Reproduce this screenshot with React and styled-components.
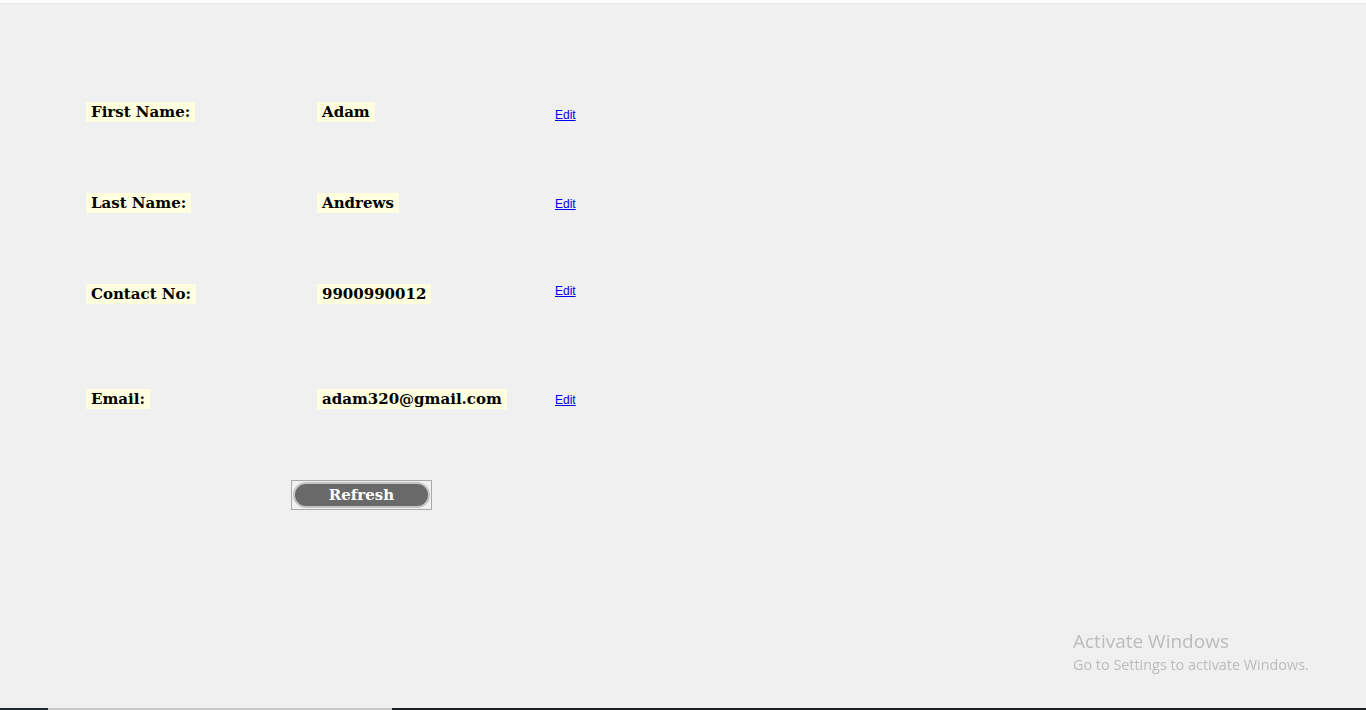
import styled, { createGlobalStyle } from "styled-components";

const GlobalStyle = createGlobalStyle`
  html, body {
    margin: 0;
    padding: 0;
    background: #f0f0f0;
  }
  #root {
    min-height: 710px;
    display: flex;
    flex-direction: column;
  }
`;

const TopStrip = styled.div`
  height: 3px;
  background: #ffffff;
  border-bottom: 1px solid #e6e6e6;
`;

const Page = styled.div`
  flex: 1;
  padding: 94px 0 0 86px;
  font-family: "DejaVu Serif", "Liberation Serif", serif;
`;

const Row = styled.div`
  display: grid;
  grid-template-columns: 231px 238px auto;
  align-items: start;
  height: ${(p) => p.$h}px;
`;

const Cell = styled.div`
  padding-top: 4px;
`;

const Tag = styled.span`
  display: inline-block;
  background: #ffffe0;
  color: #000;
  font-weight: bold;
  font-size: 15px;
  line-height: 20px;
  padding: 0 5px;
`;

const EditLink = styled.a`
  display: block;
  width: fit-content;
  margin-top: ${(p) => p.$top}px;
  font-family: "Liberation Sans", Arial, sans-serif;
  font-size: 12px;
  line-height: 14px;
  color: #0000ee;
  text-decoration: underline;
  cursor: pointer;
`;

const ButtonRow = styled.div`
  padding-left: 205px;
  margin-top: 2px;
`;

const ButtonFrame = styled.div`
  display: inline-flex;
  width: 139px;
  height: 28px;
  border: 1px solid #aaaaaa;
  align-items: center;
  justify-content: center;
`;

const RefreshButton = styled.button`
  width: 137px;
  height: 26px;
  border-radius: 13px;
  border: 2px solid #c4c4c4;
  background: #696969;
  color: #ffffff;
  font-family: "DejaVu Serif", "Liberation Serif", serif;
  font-weight: bold;
  font-size: 15px;
  padding: 0;
`;

const Watermark = styled.div`
  position: fixed;
  left: 1073px;
  top: 630px;
  font-family: "Open Sans", "Noto Sans", sans-serif;
  color: #bcbcbc;
  line-height: 1.2;
`;

const WmTitle = styled.div`
  font-size: 19px;
`;

const WmSub = styled.div`
  font-size: 14.4px;
  margin-top: 3px;
`;

const Taskbar = styled.div`
  height: 2px;
  display: flex;
  background: #1b2528;
`;

const TaskSeg = styled.div`
  width: ${(p) => p.$w}px;
  background: ${(p) => p.$c};
`;

const rows = [
  { label: "First Name:", value: "Adam", h: 91, edit: 6 },
  { label: "Last Name:", value: "Andrews", h: 91, edit: 4 },
  { label: "Contact No:", value: "9900990012", h: 105, edit: 0 },
  { label: "Email:", value: "adam320@gmail.com", h: 93, edit: 4 },
];

export default function App() {
  return (
    <>
      <GlobalStyle />
      <TopStrip />
      <Page>
        {rows.map((r) => (
          <Row key={r.label} $h={r.h}>
            <Cell>
              <Tag>{r.label}</Tag>
            </Cell>
            <Cell>
              <Tag>{r.value}</Tag>
            </Cell>
            <Cell>
              <EditLink $top={r.edit}>Edit</EditLink>
            </Cell>
          </Row>
        ))}
        <ButtonRow>
          <ButtonFrame>
            <RefreshButton>Refresh</RefreshButton>
          </ButtonFrame>
        </ButtonRow>
      </Page>
      <Watermark>
        <WmTitle>Activate Windows</WmTitle>
        <WmSub>Go to Settings to activate Windows.</WmSub>
      </Watermark>
      <Taskbar>
        <TaskSeg $w={48} $c="#1b2a30" />
        <TaskSeg $w={344} $c="#c8c8c8" />
        <TaskSeg $w={974} $c="#1c1f22" />
      </Taskbar>
    </>
  );
}
